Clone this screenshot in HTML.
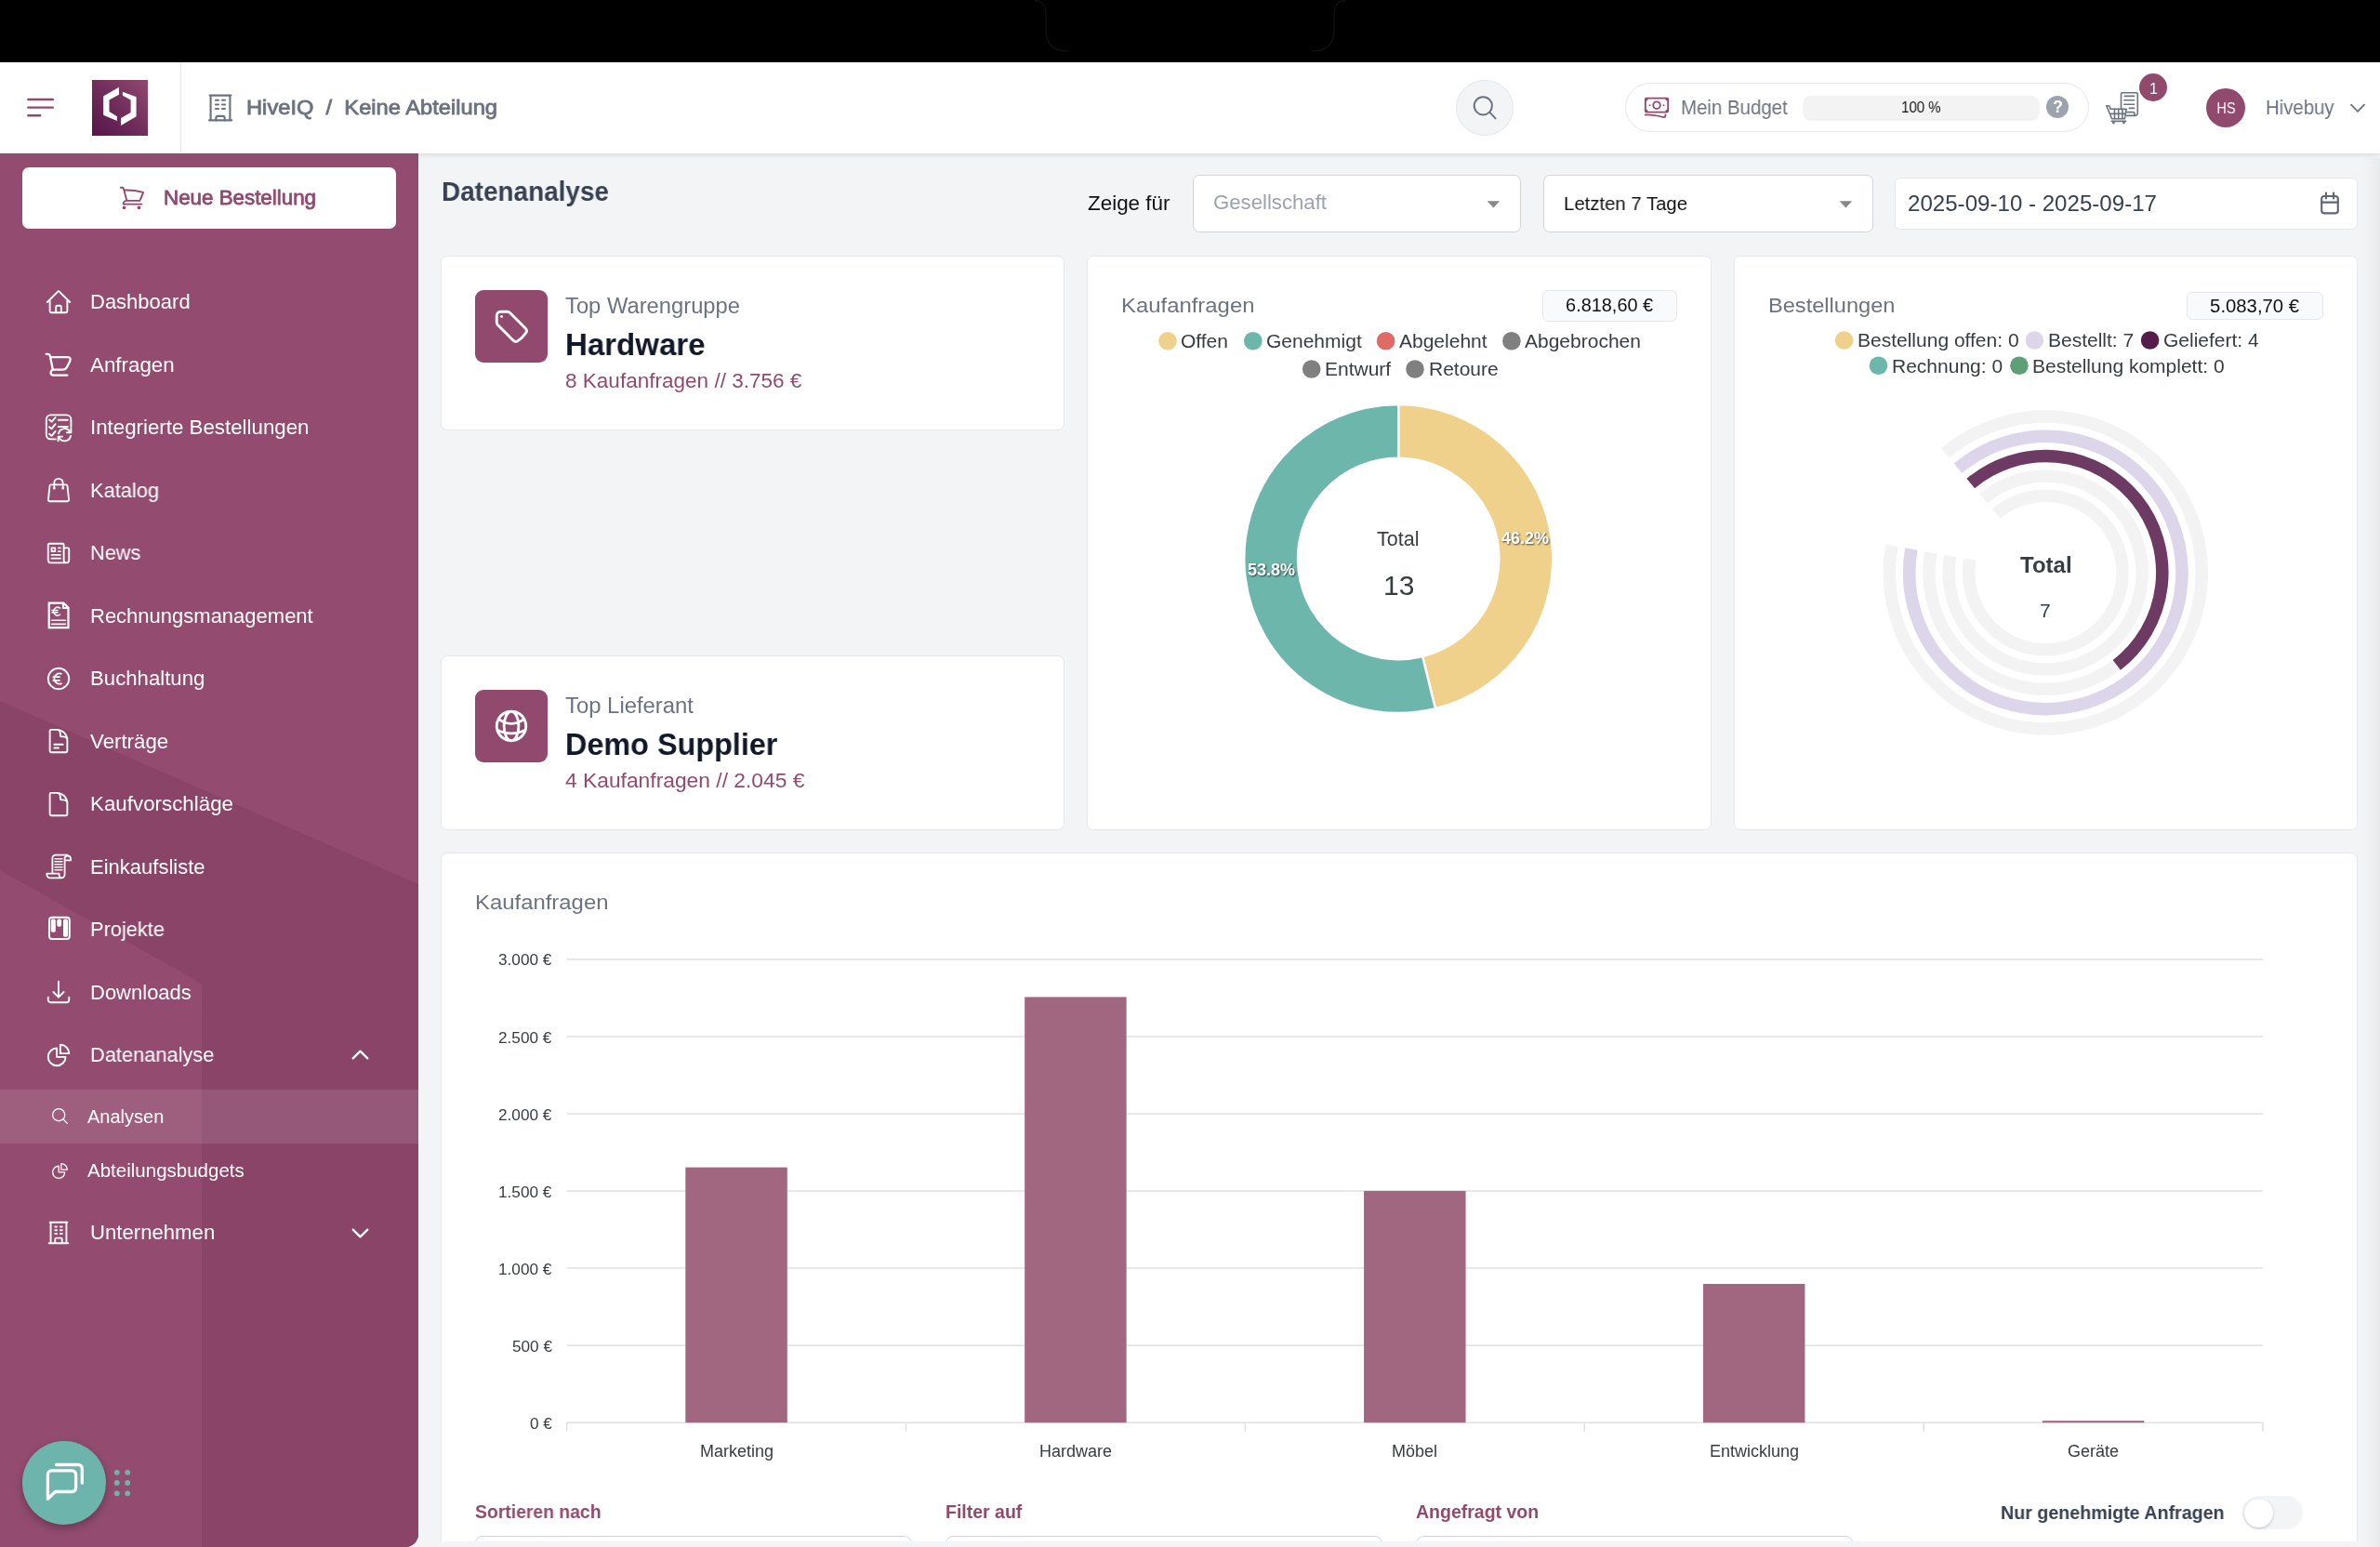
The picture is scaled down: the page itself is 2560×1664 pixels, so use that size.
<!DOCTYPE html>
<html lang="de">
<head>
<meta charset="utf-8">
<title>Datenanalyse</title>
<style>
*{box-sizing:border-box;margin:0;padding:0}
html,body{width:2560px;height:1664px;overflow:hidden}
body{position:relative;background:#F3F4F6;font-family:"Liberation Sans",sans-serif;color:#111827}
.abs{position:absolute}
.t{position:absolute;white-space:nowrap;line-height:1;will-change:transform}
svg{position:absolute;overflow:visible}
#topbar{left:0;top:0;width:2560px;height:67px;background:#000}
#header{left:0;top:67px;width:2560px;height:98px;background:#fff;box-shadow:0 2px 5px rgba(0,0,0,.10)}
#sidebar{left:0;top:165px;width:450px;height:1499px;background:#934C70;border-bottom-right-radius:14px;overflow:hidden}
.card{position:absolute;background:#fff;border:1px solid #E5E7EB;border-radius:7px}
</style>
</head>
<body>
<div id="topbar" class="abs"></div>
<svg style="left:0;top:0" width="2560" height="67" viewBox="0 0 2560 67"><path d="M1113 0.5q12 0 12 14V32q0 23 24 23M1447 0.5q-12 0 -12 14V32q0 23 -24 23" fill="none" stroke="#181818" stroke-width="1"/></svg>
<div id="header" class="abs"></div>
<svg style="left:0;top:67px" width="200" height="98" viewBox="0 67 200 98"><g stroke="#914A6E" stroke-width="2.4" stroke-linecap="round" fill="none"><path d="M30.3 107H56.8M30.3 115.6H56.8M30.3 124.2H43.2"/></g></svg>
<div class="abs" style="left:99px;top:86px;width:60px;height:60px;background:linear-gradient(45deg,#561449 0%,#6E2B5A 45%,#914A6E 100%)"></div>
<svg style="left:99px;top:86px" width="60" height="60" viewBox="0 0 60 60"><polygon fill="#fff" points="29,7.8 12.2,17.4 12.2,37.7 26.9,44 26.9,39.3 18.5,34 18.5,21.4 29,15.7"/><polygon fill="#fff" points="32.9,12.8 47.6,18.3 47.6,39.3 31.1,48.9 31.1,40.9 41.6,34.9 41.6,21.4 32.9,16.7"/></svg>
<div class="abs" style="left:194px;top:67px;width:1px;height:98px;background:#E5E7EB"></div>
<svg style="left:220px;top:96px" width="36" height="40" viewBox="220 96 36 40"><g stroke="#6B7280" stroke-width="2.1" fill="none" stroke-linecap="round" stroke-linejoin="round"><path d="M225.6 102.6H248.4M226.6 102.6V129.4M247.4 102.6V129.4M225 129.4H249.2"/><path d="M232.3 129.4V127.3a2.4 2.4 0 0 1 2.4-2.4h4.6a2.4 2.4 0 0 1 2.4 2.4V129.4"/><path d="M232 107.8H235M239 107.8H242M232 112.5H235M239 112.5H242M232 117H235M239 117H242"/></g></svg>
<div class="t" style="left:265.00px;top:105px;font-size:22.2px;color:#6B7280;transform:scaleX(1.0679);transform-origin:0 50%;-webkit-text-stroke:0.8px #6B7280;">HiveIQ&nbsp; / &nbsp;Keine Abteilung</div>
<div class="abs" style="left:1566px;top:86px;width:62px;height:60px;border-radius:50%;background:#F3F4F6;border:1px solid #E5E7EB"></div>
<svg style="left:1580px;top:98px" width="36" height="36" viewBox="1580 98 36 36"><circle cx="1595.3" cy="113.8" r="9.6" fill="none" stroke="#6B7280" stroke-width="2"/><path d="M1602.4 120.9L1608.6 127.4" stroke="#6B7280" stroke-width="2" stroke-linecap="round"/></svg>
<div class="abs" style="left:1748px;top:89px;width:499px;height:53px;border-radius:27px;background:#fff;border:1px solid #E5E7EB"></div>
<svg style="left:1767px;top:100px" width="30" height="30" viewBox="0 0 24 24" fill="none" stroke="#914A6E" stroke-width="1.5" stroke-linecap="round" stroke-linejoin="round"><path d="M2.25 18.75a60.07 60.07 0 0115.797 2.101c.727.198 1.453-.342 1.453-1.096V18.75M3.75 4.5v.75A.75.75 0 013 6h-.75m0 0v-.375c0-.621.504-1.125 1.125-1.125H20.25M2.25 6v9m18-10.5v.75c0 .414.336.75.75.75h.75m-1.5-1.5h.375c.621 0 1.125.504 1.125 1.125v9.75c0 .621-.504 1.125-1.125 1.125h-.375m1.5-1.5H21a.75.75 0 00-.75.75v.75m0 0H3.75m0 0h-.375a1.125 1.125 0 01-1.125-1.125V15m1.5 1.5v-.75A.75.75 0 003 15h-.75M15 10.5a3 3 0 11-6 0 3 3 0 016 0zm3 0h.008v.008H18V10.5zm-12 0h.008v.008H6V10.5z"/></svg>
<div class="t" style="left:1807.60px;top:105px;font-size:22.2px;color:#6B7280;transform:scaleX(0.9207);transform-origin:0 50%;">Mein Budget</div>
<div class="abs" style="left:1940px;top:103px;width:253px;height:25px;border-radius:8px;background:#F3F3F3;box-shadow:0 1px 3px rgba(0,0,0,.10)"></div>
<div class="t" style="left:2042.60px;top:107px;font-size:16.5px;color:#111;transform:scaleX(0.9103);transform-origin:50% 50%;">100 %</div>
<div class="abs" style="left:2201px;top:103px;width:24px;height:24px;border-radius:50%;background:#9CA3AF"></div>
<div class="t" style="left:2207.50px;top:106px;font-size:18px;color:#fff;font-weight:bold;">?</div>
<svg style="left:2260px;top:95px" width="46" height="42" viewBox="2260 95 46 42"><g fill="none" stroke="#6B7280" stroke-width="1.6" stroke-linecap="round" stroke-linejoin="round">
<path d="M2281.5 117V101.3a1.6 1.6 0 0 1 1.6-1.6h14.6a1.6 1.6 0 0 1 1.6 1.6V121.6a2.8 2.8 0 0 1-2.8 2.8H2287.6"/>
<path d="M2285.2 103.4H2295.6M2284.8 107.7H2295.6M2284.8 112.2H2295.6M2290.3 116.4H2295.6"/>
<path d="M2288 120.6H2294.6q1.4 0 1.4 1.6V124.2"/>
<path d="M2265.8 113.8H2268q1.2 0 1.4 1.2L2270 117.2H2287.2L2285.4 127.7H2271.6Z"/>
<path d="M2270.6 122.4H2286.3M2274.5 117.4V127.6M2278.7 117.4V127.6M2282.9 117.4V127.6"/>
<path d="M2271.2 130.4H2286.6"/>
</g><circle cx="2273.4" cy="132" r="1.4" fill="#6B7280"/><circle cx="2284.4" cy="132" r="1.4" fill="#6B7280"/></svg>
<div class="abs" style="left:2301px;top:79px;width:30px;height:30px;border-radius:50%;background:#914A6E"></div>
<div class="t" style="left:2311.55px;top:88px;font-size:16px;color:#fff;">1</div>
<div class="abs" style="left:2373px;top:95px;width:42px;height:42px;border-radius:50%;background:#914A6E"></div>
<div class="t" style="left:2382.54px;top:108px;font-size:16.5px;color:#fff;transform:scaleX(0.8725);transform-origin:50% 50%;">HS</div>
<div class="t" style="left:2437.20px;top:105px;font-size:22.2px;color:#6B7280;transform:scaleX(0.9180);transform-origin:0 50%;">Hivebuy</div>
<svg style="left:2526px;top:108px" width="20" height="16" viewBox="2526 108 20 16"><path d="M2529 112.6L2536 119.8L2543 112.6" fill="none" stroke="#6B7280" stroke-width="1.8" stroke-linecap="round" stroke-linejoin="round"/></svg>
<div id="sidebar" class="abs"><svg style="left:0;top:0" width="450" height="1499" viewBox="0 165 450 1499"><polygon points="0,754 450,951 450,1664 217,1664 217,1058 0,936" fill="#8A4468"/></svg><div class="abs" style="left:0;top:1007px;width:450px;height:58px;background:rgba(255,255,255,.11)"></div></div>
<div class="abs" style="left:24px;top:180px;width:402px;height:66px;border-radius:7px;background:#fff"></div>
<svg style="left:127px;top:198px" width="30" height="30" viewBox="0 0 24 24" fill="none" stroke="#914A6E" stroke-width="1.5" stroke-linecap="round" stroke-linejoin="round"><path d="M2.25 3h1.386c.51 0 .955.343 1.087.835l.383 1.437M7.5 14.25a3 3 0 00-3 3h15.75m-12.75-3h11.218c1.121-2.3 2.1-4.684 2.924-7.138a60.114 60.114 0 00-16.536-1.84M7.5 14.25L5.106 5.272M6 20.25a.75.75 0 11-1.5 0 .75.75 0 011.5 0zm12.75 0a.75.75 0 11-1.5 0 .75.75 0 011.5 0z"/></svg>
<div class="t" style="left:176.00px;top:202px;font-size:22.2px;color:#914A6E;transform:scaleX(1.0072);transform-origin:0 50%;-webkit-text-stroke:0.8px #914A6E;">Neue Bestellung</div>
<div class="t" style="left:96.60px;top:314px;font-size:22px;color:#fff;transform:scaleX(0.9968);transform-origin:0 50%;">Dashboard</div>
<div class="t" style="left:96.60px;top:382px;font-size:22px;color:#fff;transform:scaleX(1.0157);transform-origin:0 50%;">Anfragen</div>
<div class="t" style="left:96.60px;top:449px;font-size:22px;color:#fff;transform:scaleX(1.0134);transform-origin:0 50%;">Integrierte Bestellungen</div>
<div class="t" style="left:96.60px;top:517px;font-size:22px;color:#fff;transform:scaleX(0.9916);transform-origin:0 50%;">Katalog</div>
<div class="t" style="left:96.60px;top:584px;font-size:22px;color:#fff;transform:scaleX(0.9888);transform-origin:0 50%;">News</div>
<div class="t" style="left:96.60px;top:652px;font-size:22px;color:#fff;">Rechnungsmanagement</div>
<div class="t" style="left:96.60px;top:719px;font-size:22px;color:#fff;transform:scaleX(1.0088);transform-origin:0 50%;">Buchhaltung</div>
<div class="t" style="left:96.60px;top:787px;font-size:22px;color:#fff;transform:scaleX(1.0124);transform-origin:0 50%;">Vertr&auml;ge</div>
<div class="t" style="left:96.60px;top:854px;font-size:22px;color:#fff;transform:scaleX(1.0155);transform-origin:0 50%;">Kaufvorschl&auml;ge</div>
<div class="t" style="left:96.60px;top:922px;font-size:22px;color:#fff;">Einkaufsliste</div>
<div class="t" style="left:96.60px;top:989px;font-size:22px;color:#fff;transform:scaleX(0.9911);transform-origin:0 50%;">Projekte</div>
<div class="t" style="left:96.60px;top:1057px;font-size:22px;color:#fff;">Downloads</div>
<div class="t" style="left:96.60px;top:1124px;font-size:22px;color:#fff;transform:scaleX(0.9915);transform-origin:0 50%;">Datenanalyse</div>
<div class="t" style="left:96.60px;top:1315px;font-size:22px;color:#fff;transform:scaleX(1.0067);transform-origin:0 50%;">Unternehmen</div>
<div class="t" style="left:93.70px;top:1191px;font-size:20px;color:#fff;">Analysen</div>
<div class="t" style="left:93.70px;top:1249px;font-size:20px;color:#fff;transform:scaleX(1.0257);transform-origin:0 50%;">Abteilungsbudgets</div>
<svg style="left:48px;top:309.6px" width="30" height="30" viewBox="0 0 24 24" fill="none" stroke="#fff" stroke-width="1.5" stroke-linecap="round" stroke-linejoin="round"><path d="M2.25 12l8.954-8.955c.44-.439 1.152-.439 1.591 0L21.75 12M4.5 9.75v10.125c0 .621.504 1.125 1.125 1.125H9.75v-4.875c0-.621.504-1.125 1.125-1.125h2.25c.621 0 1.125.504 1.125 1.125V21h4.125c.621 0 1.125-.504 1.125-1.125V9.75M8.25 21h8.25"/></svg>
<svg style="left:44px;top:374px" width="40" height="36" viewBox="44 374 40 36" fill="none" stroke="#fff" stroke-width="2.3" stroke-linecap="round" stroke-linejoin="round"><path d="M49.6 380.8H51.4q2 0 2.4 2L56.8 397.6H67q3.6 0 5.2-3.2l3-6q1.8-4.2-2.6-4.2H54.6"/><path d="M56.8 397.6q-2.2 1.2-2.2 3.2q0 2.8 3 2.8H72.4"/></svg>
<svg style="left:44px;top:441px" width="40" height="38" viewBox="44 441 40 38" fill="none" stroke="#fff" stroke-width="1.9" stroke-linecap="round" stroke-linejoin="round"><path d="M59.8 472.4H54.6a4.8 4.8 0 0 1-4.8-4.8V451.2a4.8 4.8 0 0 1 4.8-4.8H71.6a4.8 4.8 0 0 1 4.8 4.8V459"/><path d="M53 451.6l2.6 2 4-4.6M53 459.2l2.6 2 4-5M53 466.8l2.6 2 4-5"/><path d="M62.8 451.8H72.8M62.8 459H72.8"/><path d="M63 466.4a6.6 6.6 0 0 1 12.4-1.6M76 469a6.6 6.6 0 0 1-12.4 1.6"/><path d="M76.4 460.6v4.6h-4.6M62.6 474.2v-4.6h4.6"/></svg>
<svg style="left:48px;top:512.1px" width="30" height="30" viewBox="0 0 24 24" fill="none" stroke="#fff" stroke-width="1.5" stroke-linecap="round" stroke-linejoin="round"><path d="M15.75 10.5V6a3.75 3.75 0 10-7.5 0v4.5m11.356-1.993l1.263 12c.07.665-.45 1.243-1.119 1.243H4.25a1.125 1.125 0 01-1.12-1.243l1.264-12A1.125 1.125 0 015.513 7.5h12.974c.576 0 1.059.435 1.119 1.007zM8.625 10.5a.375.375 0 11-.75 0 .375.375 0 01.75 0zm7.5 0a.375.375 0 11-.75 0 .375.375 0 01.75 0z"/></svg>
<svg style="left:48px;top:579.6px" width="30" height="30" viewBox="0 0 24 24" fill="none" stroke="#fff" stroke-width="1.5" stroke-linecap="round" stroke-linejoin="round"><path d="M12 7.5h1.5m-1.5 3h1.5m-7.5 3h7.5m-7.5 3h7.5m3-9h3.375c.621 0 1.125.504 1.125 1.125V18a2.25 2.25 0 01-2.25 2.25M16.5 7.5V18a2.25 2.25 0 002.25 2.25M16.5 7.5V4.875c0-.621-.504-1.125-1.125-1.125H4.125C3.504 3.75 3 4.254 3 4.875V18a2.25 2.25 0 002.25 2.25h13.5M6 7.5h3v3H6v-3z"/></svg>
<svg style="left:46px;top:642px" width="34" height="40" viewBox="46 642 34 40" fill="none" stroke="#fff" stroke-width="2.2" stroke-linecap="round" stroke-linejoin="round"><path d="M52.7 648.6H68.4L73.5 653.7V675.2H52.7Z" stroke-linejoin="miter"/><path d="M68 648.8V654H73.3"/><path d="M55.6 667.2H70.4M55.6 671.4H70.4" stroke-width="1.6"/><path d="M64.6 654.2a4.3 4.3 0 1 0 0 6.8M56 656.4H62M56 658.8H62" stroke-width="1.5"/></svg>
<svg style="left:48px;top:714.6px" width="30" height="30" viewBox="0 0 24 24" fill="none" stroke="#fff" stroke-width="1.5" stroke-linecap="round" stroke-linejoin="round"><path d="M14.25 7.756a4.5 4.5 0 100 8.488M7.5 10.5h5.25m-5.25 3h5.25M21 12a9 9 0 11-18 0 9 9 0 0118 0z"/></svg>
<svg style="left:48px;top:782.1px" width="30" height="30" viewBox="0 0 24 24" fill="none" stroke="#fff" stroke-width="1.5" stroke-linecap="round" stroke-linejoin="round"><path d="M19.5 14.25v-2.625a3.375 3.375 0 00-3.375-3.375h-1.5A1.125 1.125 0 0113.5 7.125v-1.5a3.375 3.375 0 00-3.375-3.375H8.25m0 12.75h7.5m-7.5 3H12M10.5 2.25H5.625c-.621 0-1.125.504-1.125 1.125v17.25c0 .621.504 1.125 1.125 1.125h12.75c.621 0 1.125-.504 1.125-1.125V11.25a9 9 0 00-9-9z"/></svg>
<svg style="left:48px;top:849.6px" width="30" height="30" viewBox="0 0 24 24" fill="none" stroke="#fff" stroke-width="1.5" stroke-linecap="round" stroke-linejoin="round"><path d="M19.5 14.25v-2.625a3.375 3.375 0 00-3.375-3.375h-1.5A1.125 1.125 0 0113.5 7.125v-1.5a3.375 3.375 0 00-3.375-3.375H8.25m2.25 0H5.625c-.621 0-1.125.504-1.125 1.125v17.25c0 .621.504 1.125 1.125 1.125h12.75c.621 0 1.125-.504 1.125-1.125V11.25a9 9 0 00-9-9z"/></svg>
<svg style="left:44px;top:912px" width="40" height="40" viewBox="44 912 40 40" fill="none" stroke="#fff" stroke-width="1.8" stroke-linecap="round" stroke-linejoin="round"><path d="M56.4 939.6V923a3.4 3.4 0 0 1 3.4-3.4H72.4"/><path d="M69.8 925.4H76V923a3.3 3.3 0 0 0-6.4 0V940.8a3.6 3.6 0 0 1-3.6 3.6H54a3.6 3.6 0 0 1-3.6-3.6V939.6H63.6V941a3.2 3.2 0 0 0 3 3.4"/><path d="M59 923.7H67M59 926.7H67M59 929.8H67M59 932.8H67M59 935.8H67" stroke-width="1.4"/></svg>
<svg style="left:46px;top:980px" width="36" height="36" viewBox="46 980 36 36" fill="none" stroke="#fff" stroke-width="2" stroke-linecap="round" stroke-linejoin="round"><rect x="53" y="986.8" width="21.8" height="23.2" rx="3"/><rect x="54.8" y="988.6" width="5" height="14.2" rx="1.8" fill="#fff" stroke="none"/><rect x="61.3" y="988.6" width="4.8" height="8.2" rx="1.8" fill="#fff" stroke="none"/><rect x="68" y="988.6" width="5" height="19.2" rx="1.8" fill="#fff" stroke="none"/></svg>
<svg style="left:48px;top:1052.1px" width="30" height="30" viewBox="0 0 24 24" fill="none" stroke="#fff" stroke-width="1.5" stroke-linecap="round" stroke-linejoin="round"><path d="M3 16.5v2.25A2.25 2.25 0 005.25 21h13.5A2.25 2.25 0 0021 18.75V16.5M16.5 12L12 16.5m0 0L7.5 12m4.5 4.5V3"/></svg>
<svg style="left:48px;top:1119.6px" width="30" height="30" viewBox="0 0 24 24" fill="none" stroke="#fff" stroke-width="1.5" stroke-linecap="round" stroke-linejoin="round"><path d="M10.5 6a7.5 7.5 0 107.5 7.5h-7.5V6z"/><path d="M13.5 10.5H21A7.5 7.5 0 0013.5 3v7.5z"/></svg>
<svg style="left:48px;top:1310.8px" width="30" height="30" viewBox="0 0 24 24" fill="none" stroke="#fff" stroke-width="1.5" stroke-linecap="round" stroke-linejoin="round"><path d="M3.75 21h16.5M4.5 3h15M5.25 3v18m13.5-18v18M9 6.75h1.5m-1.5 3h1.5m-1.5 3h1.5m3-6H15m-1.5 3H15m-1.5 3H15M9 21v-3.375c0-.621.504-1.125 1.125-1.125h3.75c.621 0 1.125.504 1.125 1.125V21"/></svg>
<svg style="left:53.8px;top:1190.2px" width="21" height="21" viewBox="0 0 24 24" fill="none" stroke="#fff" stroke-width="1.5" stroke-linecap="round" stroke-linejoin="round"><path d="M21 21l-5.197-5.197m0 0A7.5 7.5 0 105.196 5.196a7.5 7.5 0 0010.607 10.607z"/></svg>
<svg style="left:53.8px;top:1249px" width="21" height="21" viewBox="0 0 24 24" fill="none" stroke="#fff" stroke-width="1.5" stroke-linecap="round" stroke-linejoin="round"><path d="M10.5 6a7.5 7.5 0 107.5 7.5h-7.5V6z"/><path d="M13.5 10.5H21A7.5 7.5 0 0013.5 3v7.5z"/></svg>
<svg style="left:374.5px;top:1121.5px" width="25" height="25" viewBox="0 0 24 24" fill="none" stroke="#fff" stroke-width="2.2" stroke-linecap="round" stroke-linejoin="round"><path d="M4.5 15.75l7.5-7.5 7.5 7.5"/></svg>
<svg style="left:374.5px;top:1313.5px" width="25" height="25" viewBox="0 0 24 24" fill="none" stroke="#fff" stroke-width="2.2" stroke-linecap="round" stroke-linejoin="round"><path d="M19.5 8.25l-7.5 7.5-7.5-7.5"/></svg>
<div class="abs" style="left:24px;top:1550px;width:90px;height:90px;border-radius:50%;background:#6DB5AC;box-shadow:0 4px 10px rgba(0,0,0,.28)"></div>
<svg style="left:44px;top:1570px" width="52" height="50" viewBox="44 1570 52 50"><g fill="none" stroke="#fff" stroke-width="3.3" stroke-linecap="round" stroke-linejoin="round"><path d="M59.4 1604.5H77.6a4 4 0 0 0 4-4V1585.9a4 4 0 0 0-4-4H55.4a4 4 0 0 0-4 4V1612.3Z"/><path d="M60.6 1575.5H84.3a4 4 0 0 1 4 4V1595.2"/></g></svg>
<svg style="left:120px;top:1578px" width="24" height="34" viewBox="120 1578 24 34"><circle cx="125.8" cy="1583.8" r="2.9" fill="#6DB5AC"/><circle cx="125.8" cy="1595" r="2.9" fill="#6DB5AC"/><circle cx="125.8" cy="1606.3" r="2.9" fill="#6DB5AC"/><circle cx="137.2" cy="1583.8" r="2.9" fill="#6DB5AC"/><circle cx="137.2" cy="1595" r="2.9" fill="#6DB5AC"/><circle cx="137.2" cy="1606.3" r="2.9" fill="#6DB5AC"/></svg>
<div class="t" style="left:475.00px;top:192px;font-size:29px;color:#374151;transform:scaleX(0.9626);transform-origin:0 50%;font-weight:bold;">Datenanalyse</div>
<div class="t" style="left:1170.00px;top:208px;font-size:22px;color:#111;transform:scaleX(1.0193);transform-origin:0 50%;">Zeige f&uuml;r</div>
<div class="abs" style="left:1283px;top:188px;width:353px;height:62px;border-radius:7px;background:#fff;border:1px solid #D1D5DB"></div>
<div class="abs" style="left:1660px;top:188px;width:355px;height:62px;border-radius:7px;background:#fff;border:1px solid #D1D5DB"></div>
<div class="t" style="left:1305.40px;top:208px;font-size:21.5px;color:#9CA3AF;transform:scaleX(1.0312);transform-origin:0 50%;">Gesellschaft</div>
<div class="t" style="left:1682.00px;top:209px;font-size:20.5px;color:#111;transform:scaleX(0.9916);transform-origin:0 50%;">Letzten 7 Tage</div>
<svg style="left:1599.0px;top:214.7px" width="16" height="10" viewBox="0 0 16 10"><path d="M0.6 1.2H14.2L7.4 8.6Z" fill="#888"/></svg>
<svg style="left:1978.0px;top:214.7px" width="16" height="10" viewBox="0 0 16 10"><path d="M0.6 1.2H14.2L7.4 8.6Z" fill="#888"/></svg>
<div class="abs" style="left:2038px;top:191px;width:498px;height:56px;border-radius:6px;background:#fff;border:1px solid #E5E7EB"></div>
<div class="t" style="left:2052.00px;top:208px;font-size:23px;color:#374151;transform:scaleX(1.0479);transform-origin:0 50%;">2025-09-10 - 2025-09-17</div>
<svg style="left:2490px;top:200px" width="32" height="36" viewBox="2490 200 32 36" fill="none" stroke="#5F6672" stroke-width="2.1" stroke-linecap="round"><rect x="2497.2" y="211" width="17.6" height="18.4" rx="2.8"/><path d="M2497.2 217.6H2514.8M2502 207.6V213.4M2510.1 207.6V213.4"/></svg>
<div class="card" style="left:474px;top:275px;width:671px;height:188px"></div>
<div class="abs" style="left:511px;top:312px;width:78px;height:78px;border-radius:9px;background:#914A6E"></div>
<svg style="left:529px;top:330px" width="42" height="42" viewBox="0 0 24 24" fill="none" stroke="#fff" stroke-width="1.65" stroke-linecap="round" stroke-linejoin="round"><path d="M9.568 3H5.25A2.25 2.25 0 003 5.25v4.318c0 .597.237 1.17.659 1.591l9.581 9.581c.699.699 1.78.872 2.607.33a18.095 18.095 0 005.223-5.223c.542-.827.369-1.908-.33-2.607L11.16 3.66A2.25 2.25 0 009.568 3z"/><path d="M6 6h.008v.008H6V6z"/></svg>
<div class="t" style="left:608.00px;top:318px;font-size:23px;color:#6B7280;transform:scaleX(1.0331);transform-origin:0 50%;">Top Warengruppe</div>
<div class="t" style="left:608.00px;top:354px;font-size:33.5px;color:#111827;transform:scaleX(0.9863);transform-origin:0 50%;font-weight:bold;">Hardware</div>
<div class="t" style="left:608.00px;top:400px;font-size:21.5px;color:#914A6E;transform:scaleX(1.0483);transform-origin:0 50%;">8 Kaufanfragen // 3.756 &euro;</div>
<div class="card" style="left:474px;top:705px;width:671px;height:188px"></div>
<div class="abs" style="left:511px;top:742px;width:78px;height:78px;border-radius:9px;background:#914A6E"></div>
<svg style="left:529px;top:760px" width="42" height="42" viewBox="0 0 24 24" fill="none" stroke="#fff" stroke-width="1.65" stroke-linecap="round" stroke-linejoin="round"><path d="M12 21a9.004 9.004 0 008.716-6.747M12 21a9.004 9.004 0 01-8.716-6.747M12 21c2.485 0 4.5-4.03 4.5-9S14.485 3 12 3m0 18c-2.485 0-4.5-4.03-4.5-9S9.515 3 12 3m0 0a8.997 8.997 0 017.843 4.582M12 3a8.997 8.997 0 00-7.843 4.582m15.686 0A11.953 11.953 0 0112 10.5c-2.998 0-5.74-1.1-7.843-2.918m15.686 0A8.959 8.959 0 0121 12c0 .778-.099 1.533-.284 2.253m0 0A17.919 17.919 0 0112 16.5c-3.162 0-6.133-.815-8.716-2.247m0 0A9.015 9.015 0 013 12c0-1.605.42-3.113 1.157-4.418"/></svg>
<div class="t" style="left:608.00px;top:748px;font-size:23px;color:#6B7280;transform:scaleX(1.0377);transform-origin:0 50%;">Top Lieferant</div>
<div class="t" style="left:608.00px;top:784px;font-size:33.5px;color:#111827;transform:scaleX(0.9661);transform-origin:0 50%;font-weight:bold;">Demo Supplier</div>
<div class="t" style="left:608.00px;top:830px;font-size:21.5px;color:#914A6E;transform:scaleX(1.0607);transform-origin:0 50%;">4 Kaufanfragen // 2.045 &euro;</div>
<div class="card" style="left:1169px;top:275px;width:672px;height:618px"></div>
<div class="t" style="left:1205.80px;top:318px;font-size:22.5px;color:#6B7280;transform:scaleX(1.0620);transform-origin:0 50%;">Kaufanfragen</div>
<div class="abs" style="left:1659px;top:312px;width:145px;height:34px;border-radius:6px;background:#F9FAFB;border:1px solid #E5E7EB"></div>
<div class="t" style="left:1685.41px;top:319px;font-size:19.5px;color:#111;transform:scaleX(1.0198);transform-origin:50% 50%;">6.818,60 &euro;</div>
<svg style="left:1170px;top:276px" width="671" height="616" viewBox="1170 276 671 616"><path d="M1504.20 435.00A166 166 0 0 1 1543.93 762.18L1530.09 706.06A108.2 108.2 0 0 0 1504.20 492.80Z" fill="#F0D18B" stroke="#fff" stroke-width="2.4" stroke-linejoin="round"/><path d="M1543.93 762.18A166 166 0 1 1 1504.20 435.00L1504.20 492.80A108.2 108.2 0 1 0 1530.09 706.06Z" fill="#6DB6AC" stroke="#fff" stroke-width="2.4" stroke-linejoin="round"/><circle cx="1256" cy="366.7" r="9.8" fill="#F0D18B"/><circle cx="1347.8" cy="366.7" r="9.8" fill="#6DB6AC"/><circle cx="1490.6" cy="366.7" r="9.8" fill="#E06B66"/><circle cx="1625.9" cy="366.7" r="9.8" fill="#808080"/><circle cx="1410.7" cy="397" r="9.8" fill="#808080"/><circle cx="1522" cy="397" r="9.8" fill="#808080"/></svg>
<div class="t" style="left:1270.00px;top:356px;font-size:21px;color:#373D3F;">Offen</div>
<div class="t" style="left:1362.00px;top:356px;font-size:21px;color:#373D3F;">Genehmigt</div>
<div class="t" style="left:1505.00px;top:356px;font-size:21px;color:#373D3F;">Abgelehnt</div>
<div class="t" style="left:1640.00px;top:356px;font-size:21px;color:#373D3F;">Abgebrochen</div>
<div class="t" style="left:1424.80px;top:386px;font-size:21px;color:#373D3F;">Entwurf</div>
<div class="t" style="left:1536.50px;top:386px;font-size:21px;color:#373D3F;">Retoure</div>
<div class="t" style="left:1615.28px;top:570px;font-size:18px;color:#fff;font-weight:bold;text-shadow:1px 1px 2px rgba(0,0,0,.65);">46.2%</div>
<div class="t" style="left:1342.48px;top:604px;font-size:18px;color:#fff;font-weight:bold;text-shadow:1px 1px 2px rgba(0,0,0,.65);">53.8%</div>
<div class="t" style="left:1481.49px;top:570px;font-size:21.5px;color:#373D3F;">Total</div>
<div class="t" style="left:1487.51px;top:615px;font-size:30px;color:#373D3F;">13</div>
<div class="card" style="left:1865px;top:275px;width:671px;height:618px"></div>
<div class="t" style="left:1902.00px;top:318px;font-size:22.5px;color:#6B7280;transform:scaleX(1.0491);transform-origin:0 50%;">Bestellungen</div>
<div class="abs" style="left:2352px;top:314px;width:147px;height:30px;border-radius:6px;background:#F9FAFB;border:1px solid #E5E7EB"></div>
<div class="t" style="left:2379.21px;top:320px;font-size:19.5px;color:#111;transform:scaleX(1.0415);transform-origin:50% 50%;">5.083,70 &euro;</div>
<svg style="left:1865px;top:276px" width="671" height="616" viewBox="1865 276 671 616"><g fill="none" stroke-width="13.5"><path d="M2092.34 487.34A167.95 167.95 0 1 1 2034.90 586.84" stroke="#F3F3F3"/><path d="M2106.04 503.66A146.65 146.65 0 1 1 2055.88 590.53" stroke="#F3F3F3"/><path d="M2119.73 519.98A125.35 125.35 0 1 1 2076.85 594.23" stroke="#F3F3F3"/><path d="M2133.42 536.29A104.05 104.05 0 1 1 2097.83 597.93" stroke="#F3F3F3"/><path d="M2147.11 552.61A82.75 82.75 0 1 1 2118.81 601.63" stroke="#F3F3F3"/><path d="M2106.04 503.66A146.65 146.65 0 1 1 2055.88 590.53" stroke="#DDD6EA"/><path d="M2119.73 519.98A125.35 125.35 0 1 1 2276.78 715.31" stroke="#6C3A63"/></g><circle cx="1983.6" cy="366" r="9.8" fill="#F0D18B"/><circle cx="2188.4" cy="366" r="9.8" fill="#DDD6EA"/><circle cx="2312.6" cy="366" r="9.8" fill="#561B4D"/><circle cx="2020.5" cy="393.2" r="9.8" fill="#6DB6AC"/><circle cx="2171.9" cy="393.2" r="9.8" fill="#5F9F78"/></svg>
<div class="t" style="left:1998.00px;top:355px;font-size:21px;color:#373D3F;">Bestellung offen: 0</div>
<div class="t" style="left:2203.00px;top:355px;font-size:21px;color:#373D3F;">Bestellt: 7</div>
<div class="t" style="left:2327.00px;top:355px;font-size:21px;color:#373D3F;">Geliefert: 4</div>
<div class="t" style="left:2035.40px;top:383px;font-size:21px;color:#373D3F;">Rechnung: 0</div>
<div class="t" style="left:2186.00px;top:383px;font-size:21px;color:#373D3F;">Bestellung komplett: 0</div>
<div class="t" style="left:2172.53px;top:596px;font-size:24px;color:#373D3F;font-weight:bold;">Total</div>
<div class="t" style="left:2194.46px;top:646px;font-size:21px;color:#373D3F;">7</div>
<div class="card" style="left:474px;top:917px;width:2062px;height:760px;border-bottom:none;border-bottom-left-radius:0;border-bottom-right-radius:0"></div>
<div class="t" style="left:511.40px;top:960px;font-size:22.5px;color:#6B7280;transform:scaleX(1.0620);transform-origin:0 50%;">Kaufanfragen</div>
<svg style="left:475px;top:918px" width="2061" height="740" viewBox="475 918 2061 740"><path d="M609.6 1530.20H2434.0" stroke="#E0E0E0" stroke-width="1.5"/><path d="M609.6 1447.15H2434.0" stroke="#E0E0E0" stroke-width="1.5"/><path d="M609.6 1364.10H2434.0" stroke="#E0E0E0" stroke-width="1.5"/><path d="M609.6 1281.05H2434.0" stroke="#E0E0E0" stroke-width="1.5"/><path d="M609.6 1198.00H2434.0" stroke="#E0E0E0" stroke-width="1.5"/><path d="M609.6 1114.95H2434.0" stroke="#E0E0E0" stroke-width="1.5"/><path d="M609.6 1031.90H2434.0" stroke="#E0E0E0" stroke-width="1.5"/><path d="M609.60 1530.2V1539.7" stroke="#E0E0E0" stroke-width="1.5"/><path d="M974.48 1530.2V1539.7" stroke="#E0E0E0" stroke-width="1.5"/><path d="M1339.36 1530.2V1539.7" stroke="#E0E0E0" stroke-width="1.5"/><path d="M1704.24 1530.2V1539.7" stroke="#E0E0E0" stroke-width="1.5"/><path d="M2069.12 1530.2V1539.7" stroke="#E0E0E0" stroke-width="1.5"/><path d="M2434.00 1530.2V1539.7" stroke="#E0E0E0" stroke-width="1.5"/><rect x="737.31" y="1255.64" width="109.46" height="274.56" fill="#A16680"/><rect x="1102.19" y="1072.43" width="109.46" height="457.77" fill="#A16680"/><rect x="1467.07" y="1281.05" width="109.46" height="249.15" fill="#A16680"/><rect x="1831.95" y="1381.04" width="109.46" height="149.16" fill="#A16680"/><rect x="2196.83" y="1528.21" width="109.46" height="1.99" fill="#A16680"/></svg>
<div class="t" style="left:752.52px;top:1552px;font-size:18px;color:#373D3F;">Marketing</div>
<div class="t" style="left:1117.90px;top:1552px;font-size:18px;color:#373D3F;">Hardware</div>
<div class="t" style="left:1497.28px;top:1552px;font-size:18px;color:#373D3F;">M&ouml;bel</div>
<div class="t" style="left:1838.66px;top:1552px;font-size:18px;color:#373D3F;">Entwicklung</div>
<div class="t" style="left:2224.04px;top:1552px;font-size:18px;color:#373D3F;">Ger&auml;te</div>
<div class="t" style="left:569.89px;top:1523px;font-size:17.2px;color:#373D3F;">0 &euro;</div>
<div class="t" style="left:550.78px;top:1440px;font-size:17.2px;color:#373D3F;">500 &euro;</div>
<div class="t" style="left:536.44px;top:1357px;font-size:17.2px;color:#373D3F;">1.000 &euro;</div>
<div class="t" style="left:536.44px;top:1274px;font-size:17.2px;color:#373D3F;">1.500 &euro;</div>
<div class="t" style="left:536.44px;top:1191px;font-size:17.2px;color:#373D3F;">2.000 &euro;</div>
<div class="t" style="left:536.44px;top:1108px;font-size:17.2px;color:#373D3F;">2.500 &euro;</div>
<div class="t" style="left:536.44px;top:1024px;font-size:17.2px;color:#373D3F;">3.000 &euro;</div>
<div class="t" style="left:511.40px;top:1617px;font-size:19.5px;color:#914A6E;transform:scaleX(0.9923);transform-origin:0 50%;font-weight:bold;">Sortieren nach</div>
<div class="t" style="left:1017.00px;top:1617px;font-size:19.5px;color:#914A6E;transform:scaleX(0.9958);transform-origin:0 50%;font-weight:bold;">Filter auf</div>
<div class="t" style="left:1523.30px;top:1617px;font-size:19.5px;color:#914A6E;font-weight:bold;">Angefragt von</div>
<div class="t" style="left:2152.00px;top:1617px;font-size:20px;color:#374151;transform:scaleX(0.9827);transform-origin:0 50%;font-weight:bold;">Nur genehmigte Anfragen</div>
<div class="abs" style="left:511px;top:1652px;width:470px;height:40px;border-radius:8px;background:#fff;border:1px solid #D1D5DB"></div>
<div class="abs" style="left:1017px;top:1652px;width:470px;height:40px;border-radius:8px;background:#fff;border:1px solid #D1D5DB"></div>
<div class="abs" style="left:1523px;top:1652px;width:470px;height:40px;border-radius:8px;background:#fff;border:1px solid #D1D5DB"></div>
<div class="abs" style="left:2412px;top:1609px;width:65px;height:36px;border-radius:18px;background:#F3F4F6"></div>
<div class="abs" style="left:2414px;top:1611.5px;width:31px;height:31px;border-radius:50%;background:#fff;box-shadow:0 1px 3px rgba(0,0,0,.22)"></div>
<div class="abs" style="left:450px;top:1658px;width:2110px;height:6px;background:#F3F4F6"></div>
<div class="abs" style="left:2542px;top:170px;width:18px;height:1494px;background:linear-gradient(90deg,rgba(0,0,0,0),rgba(0,0,0,.04))"></div>
</body>
</html>
